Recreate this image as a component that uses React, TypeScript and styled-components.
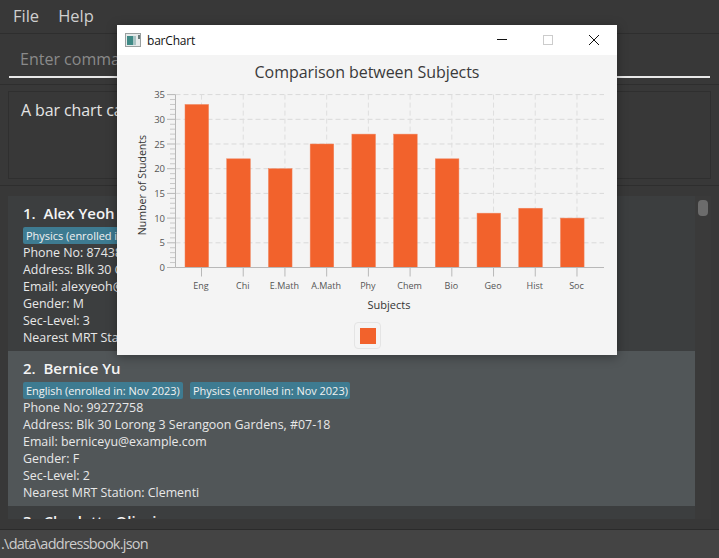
import React from "react"
import styled, { createGlobalStyle } from "styled-components"

const GlobalStyle = createGlobalStyle`
  html, body {
    margin: 0;
    padding: 0;
    background: #383838;
  }
  * {
    box-sizing: border-box;
  }
`

const Page = styled.div`
  position: relative;
  display: flex;
  flex-direction: column;
  width: 719px;
  height: 558px;
  overflow: hidden;
  background: #383838;
  font-family: "Open Sans", "Noto Sans", sans-serif;
`

const MenuBar = styled.div`
  display: flex;
  flex-shrink: 0;
  gap: 19px;
  align-items: center;
  height: 34px;
  padding: 0 13px 2px;
  background: #383838;
  border-bottom: 1px solid #2e2e2e;
  color: #cfcfcf;
  font-size: 16.5px;
`

const CommandSection = styled.div`
  flex-shrink: 0;
  height: 51px;
  padding: 0 9px 6px;
  border-bottom: 1px solid #2e2e2e;
`

const CommandInput = styled.div`
  height: 44px;
  padding: 14px 11px 0;
  border-bottom: 2px solid #e8e8e8;
  color: #8a8a8a;
  font-size: 16px;
  line-height: 22px;
  white-space: nowrap;
  overflow: hidden;
`

const ResultSection = styled.div`
  flex-shrink: 0;
  height: 101px;
  padding: 6px 8px;
  border-bottom: 1px solid #2e2e2e;
`

const ResultBox = styled.div`
  height: 88px;
  padding: 6px 12px;
  border: 1px solid #2f2f2f;
  color: #e4e4e4;
  font-size: 16px;
  letter-spacing: -0.1px;
  line-height: 24px;
`

const ListSection = styled.div`
  display: flex;
  flex-shrink: 0;
  height: 343px;
  padding: 10px 8px;
`

const PersonList = styled.div`
  flex: 1;
  overflow: hidden;
`

const ScrollTrack = styled.div`
  width: 16px;
  padding: 4px 3px;
  background: #3a3a3a;
`

const ScrollThumb = styled.div`
  height: 16px;
  border-radius: 4px;
  background: #6c6c6c;
`

const Card = styled.div<{ $odd?: boolean; $top?: number }>`
  height: 155px;
  padding: ${(p) => p.$top ?? 7}px 15px 8px;
  background: ${(p) => (p.$odd ? "#515658" : "#3c3e3f")};
  color: #e8e8e8;
  font-size: 12.4px;
  line-height: 17px;
`

const Name = styled.div`
  margin-bottom: 4px;
  color: #f4f4f4;
  font-size: 15px;
  font-weight: 600;
  line-height: 20px;
  white-space: pre;
`

const Tags = styled.div`
  display: flex;
  gap: 7px;
`

const Tag = styled.span`
  width: 160px;
  height: 17px;
  padding: 0 3px;
  border-radius: 2px;
  background: #3e7b91;
  color: #f2f2f2;
  font-size: 11px;
  letter-spacing: -0.03px;
  line-height: 17px;
  white-space: nowrap;
`

const StatusBar = styled.div`
  flex: 1;
  padding: 4px 1px;
  background: #444444;
  border-top: 1px solid #2b2b2b;
  color: #cccccc;
  font-size: 14.5px;
  letter-spacing: -0.75px;
  line-height: 20px;
`

const ChartWindow = styled.div`
  position: absolute;
  left: 117px;
  top: 25px;
  display: flex;
  flex-direction: column;
  width: 500px;
  height: 330px;
  background: #f4f4f4;
  box-shadow: 0 2px 10px rgba(0, 0, 0, 0.35);
`

const TitleBar = styled.div`
  display: flex;
  align-items: center;
  height: 30px;
  padding-left: 8px;
  background: #ffffff;
  color: #111111;
  font-size: 12px;
  letter-spacing: -0.2px;
`

const TitleText = styled.span`
  flex: 1;
  margin-left: 6px;
`

const WindowButton = styled.div`
  display: flex;
  align-items: center;
  justify-content: center;
  width: 46px;
  height: 30px;
`

const ChartTitle = styled.div`
  height: 30px;
  padding-top: 5px;
  color: #3a3a3a;
  font-size: 16px;
  letter-spacing: -0.05px;
  line-height: 24px;
  text-align: center;
`

const Plot = styled.svg`
  display: block;
  font-family: "Open Sans", "Noto Sans", sans-serif;
`

const Legend = styled.div`
  align-self: center;
  width: 27px;
  height: 27px;
  margin-top: 5px;
  padding: 5px;
  border: 1px solid #e4e4e4;
  border-radius: 4px;
`

const LegendSwatch = styled.div`
  width: 16px;
  height: 16px;
  background: #f2622c;
`

const subjects: [string, number][] = [
  ["Eng", 33],
  ["Chi", 22],
  ["E.Math", 20],
  ["A.Math", 25],
  ["Phy", 27],
  ["Chem", 27],
  ["Bio", 22],
  ["Geo", 11],
  ["Hist", 12],
  ["Soc", 10],
]

// plot coordinates, relative to the svg
const axisX = 58.5
const axisRight = 487
const zeroY = 182.5
const unit = 4.94
const tickStep = 41.72
const firstTick = 84.5
const yTicks = [0, 5, 10, 15, 20, 25, 30, 35]
const minorTicks = Array.from({ length: 36 }, (_, i) => i).filter((i) => i % 5 !== 0)

function BarChart() {
  return (
    <Plot width={500} height={232} viewBox="0 0 500 232">
      {yTicks.map((v) => (
        <g key={v}>
          {v > 0 && (
            <line
              x1={axisX}
              x2={axisRight}
              y1={zeroY - v * unit}
              y2={zeroY - v * unit}
              stroke="#d9d9d9"
              strokeDasharray="5 3"
            />
          )}
          <line x1={50} x2={axisX} y1={zeroY - v * unit} y2={zeroY - v * unit} stroke="#b8b8b8" />
          <text x={48} y={zeroY - v * unit + 3.5} textAnchor="end" fontSize={9.5} fill="#555555">
            {v}
          </text>
        </g>
      ))}
      {minorTicks.map((v) => (
        <line key={v} x1={53} x2={axisX} y1={zeroY - v * unit} y2={zeroY - v * unit} stroke="#c8c8c8" />
      ))}
      {subjects.map(([label], i) => {
        const x = firstTick + i * tickStep
        return (
          <g key={label}>
            <line x1={x} x2={x} y1={zeroY - 35 * unit} y2={zeroY} stroke="#dedede" strokeDasharray="5 3" />
            <line x1={x} x2={x} y1={zeroY} y2={zeroY + 9} stroke="#b8b8b8" />
            <text x={x - 0.5} y={zeroY + 21.5} textAnchor="middle" fontSize={9} fill="#555555">
              {label}
            </text>
          </g>
        )
      })}
      {subjects.map(([label, value], i) => (
        <rect
          key={label}
          x={68 + i * tickStep}
          y={zeroY - value * unit}
          width={23.6}
          height={value * unit}
          fill="#f2622c"
          stroke="#f0845c"
          strokeWidth={0.5}
        />
      ))}
      <line x1={axisX} x2={axisX} y1={zeroY - 35 * unit} y2={zeroY} stroke="#b8b8b8" />
      <line x1={axisX} x2={axisRight} y1={zeroY} y2={zeroY} stroke="#b8b8b8" />
      <text x={272} y={224} textAnchor="middle" fontSize={11} fill="#333333">
        Subjects
      </text>
      <text
        transform="translate(29 100) rotate(-90)"
        textAnchor="middle"
        fontSize={10.6}
        fill="#333333"
      >
        Number of Students
      </text>
    </Plot>
  )
}

export default function App() {
  return (
    <Page>
      <GlobalStyle />
      <MenuBar>
        <span>File</span>
        <span>Help</span>
      </MenuBar>
      <CommandSection>
        <CommandInput>Enter command here...</CommandInput>
      </CommandSection>
      <ResultSection>
        <ResultBox>A bar chart calculating the number of students.</ResultBox>
      </ResultSection>
      <ListSection>
        <PersonList>
          <Card>
            <Name>1.  Alex Yeoh</Name>
            <Tags>
              <Tag>Physics (enrolled in: Nov 2023)</Tag>
            </Tags>
            <div>Phone No: 87438807</div>
            <div>Address: Blk 30 Geylang Street 29, #06-40</div>
            <div>Email: alexyeoh@example.com</div>
            <div>Gender: M</div>
            <div>Sec-Level: 3</div>
            <div>Nearest MRT Station: Clementi</div>
          </Card>
          <Card $odd>
            <Name>2.  Bernice Yu</Name>
            <Tags>
              <Tag>English (enrolled in: Nov 2023)</Tag>
              <Tag>Physics (enrolled in: Nov 2023)</Tag>
            </Tags>
            <div>Phone No: 99272758</div>
            <div>Address: Blk 30 Lorong 3 Serangoon Gardens, #07-18</div>
            <div>Email: berniceyu@example.com</div>
            <div>Gender: F</div>
            <div>Sec-Level: 2</div>
            <div>Nearest MRT Station: Clementi</div>
          </Card>
          <Card $top={5}>
            <Name>3.  Charlotte Oliveiro</Name>
          </Card>
        </PersonList>
        <ScrollTrack>
          <ScrollThumb />
        </ScrollTrack>
      </ListSection>
      <StatusBar>.\data\addressbook.json</StatusBar>

      <ChartWindow>
        <TitleBar>
          <svg width="16" height="14" viewBox="0 0 16 14">
            <rect x="0.5" y="0.5" width="15" height="13" fill="#e6eaea" stroke="#9aa0a0" />
            <rect x="2" y="3" width="6" height="9" fill="#3f8a86" />
            <rect x="8" y="3" width="3" height="9" fill="#a8c4c4" />
            <rect x="13" y="2" width="2" height="4" fill="#6a7a7a" />
          </svg>
          <TitleText>barChart</TitleText>
          <WindowButton>
            <svg width="10" height="10" viewBox="0 0 10 10">
              <line x1="0" y1="4.5" x2="10" y2="4.5" stroke="#111111" />
            </svg>
          </WindowButton>
          <WindowButton>
            <svg width="10" height="10" viewBox="0 0 10 10">
              <rect x="0.5" y="0.5" width="9" height="9" fill="none" stroke="#cccccc" />
            </svg>
          </WindowButton>
          <WindowButton>
            <svg width="10" height="10" viewBox="0 0 10 10">
              <path d="M0 0 L10 10 M10 0 L0 10" stroke="#111111" fill="none" />
            </svg>
          </WindowButton>
        </TitleBar>
        <ChartTitle>Comparison between Subjects</ChartTitle>
        <BarChart />
        <Legend>
          <LegendSwatch />
        </Legend>
      </ChartWindow>
    </Page>
  )
}
